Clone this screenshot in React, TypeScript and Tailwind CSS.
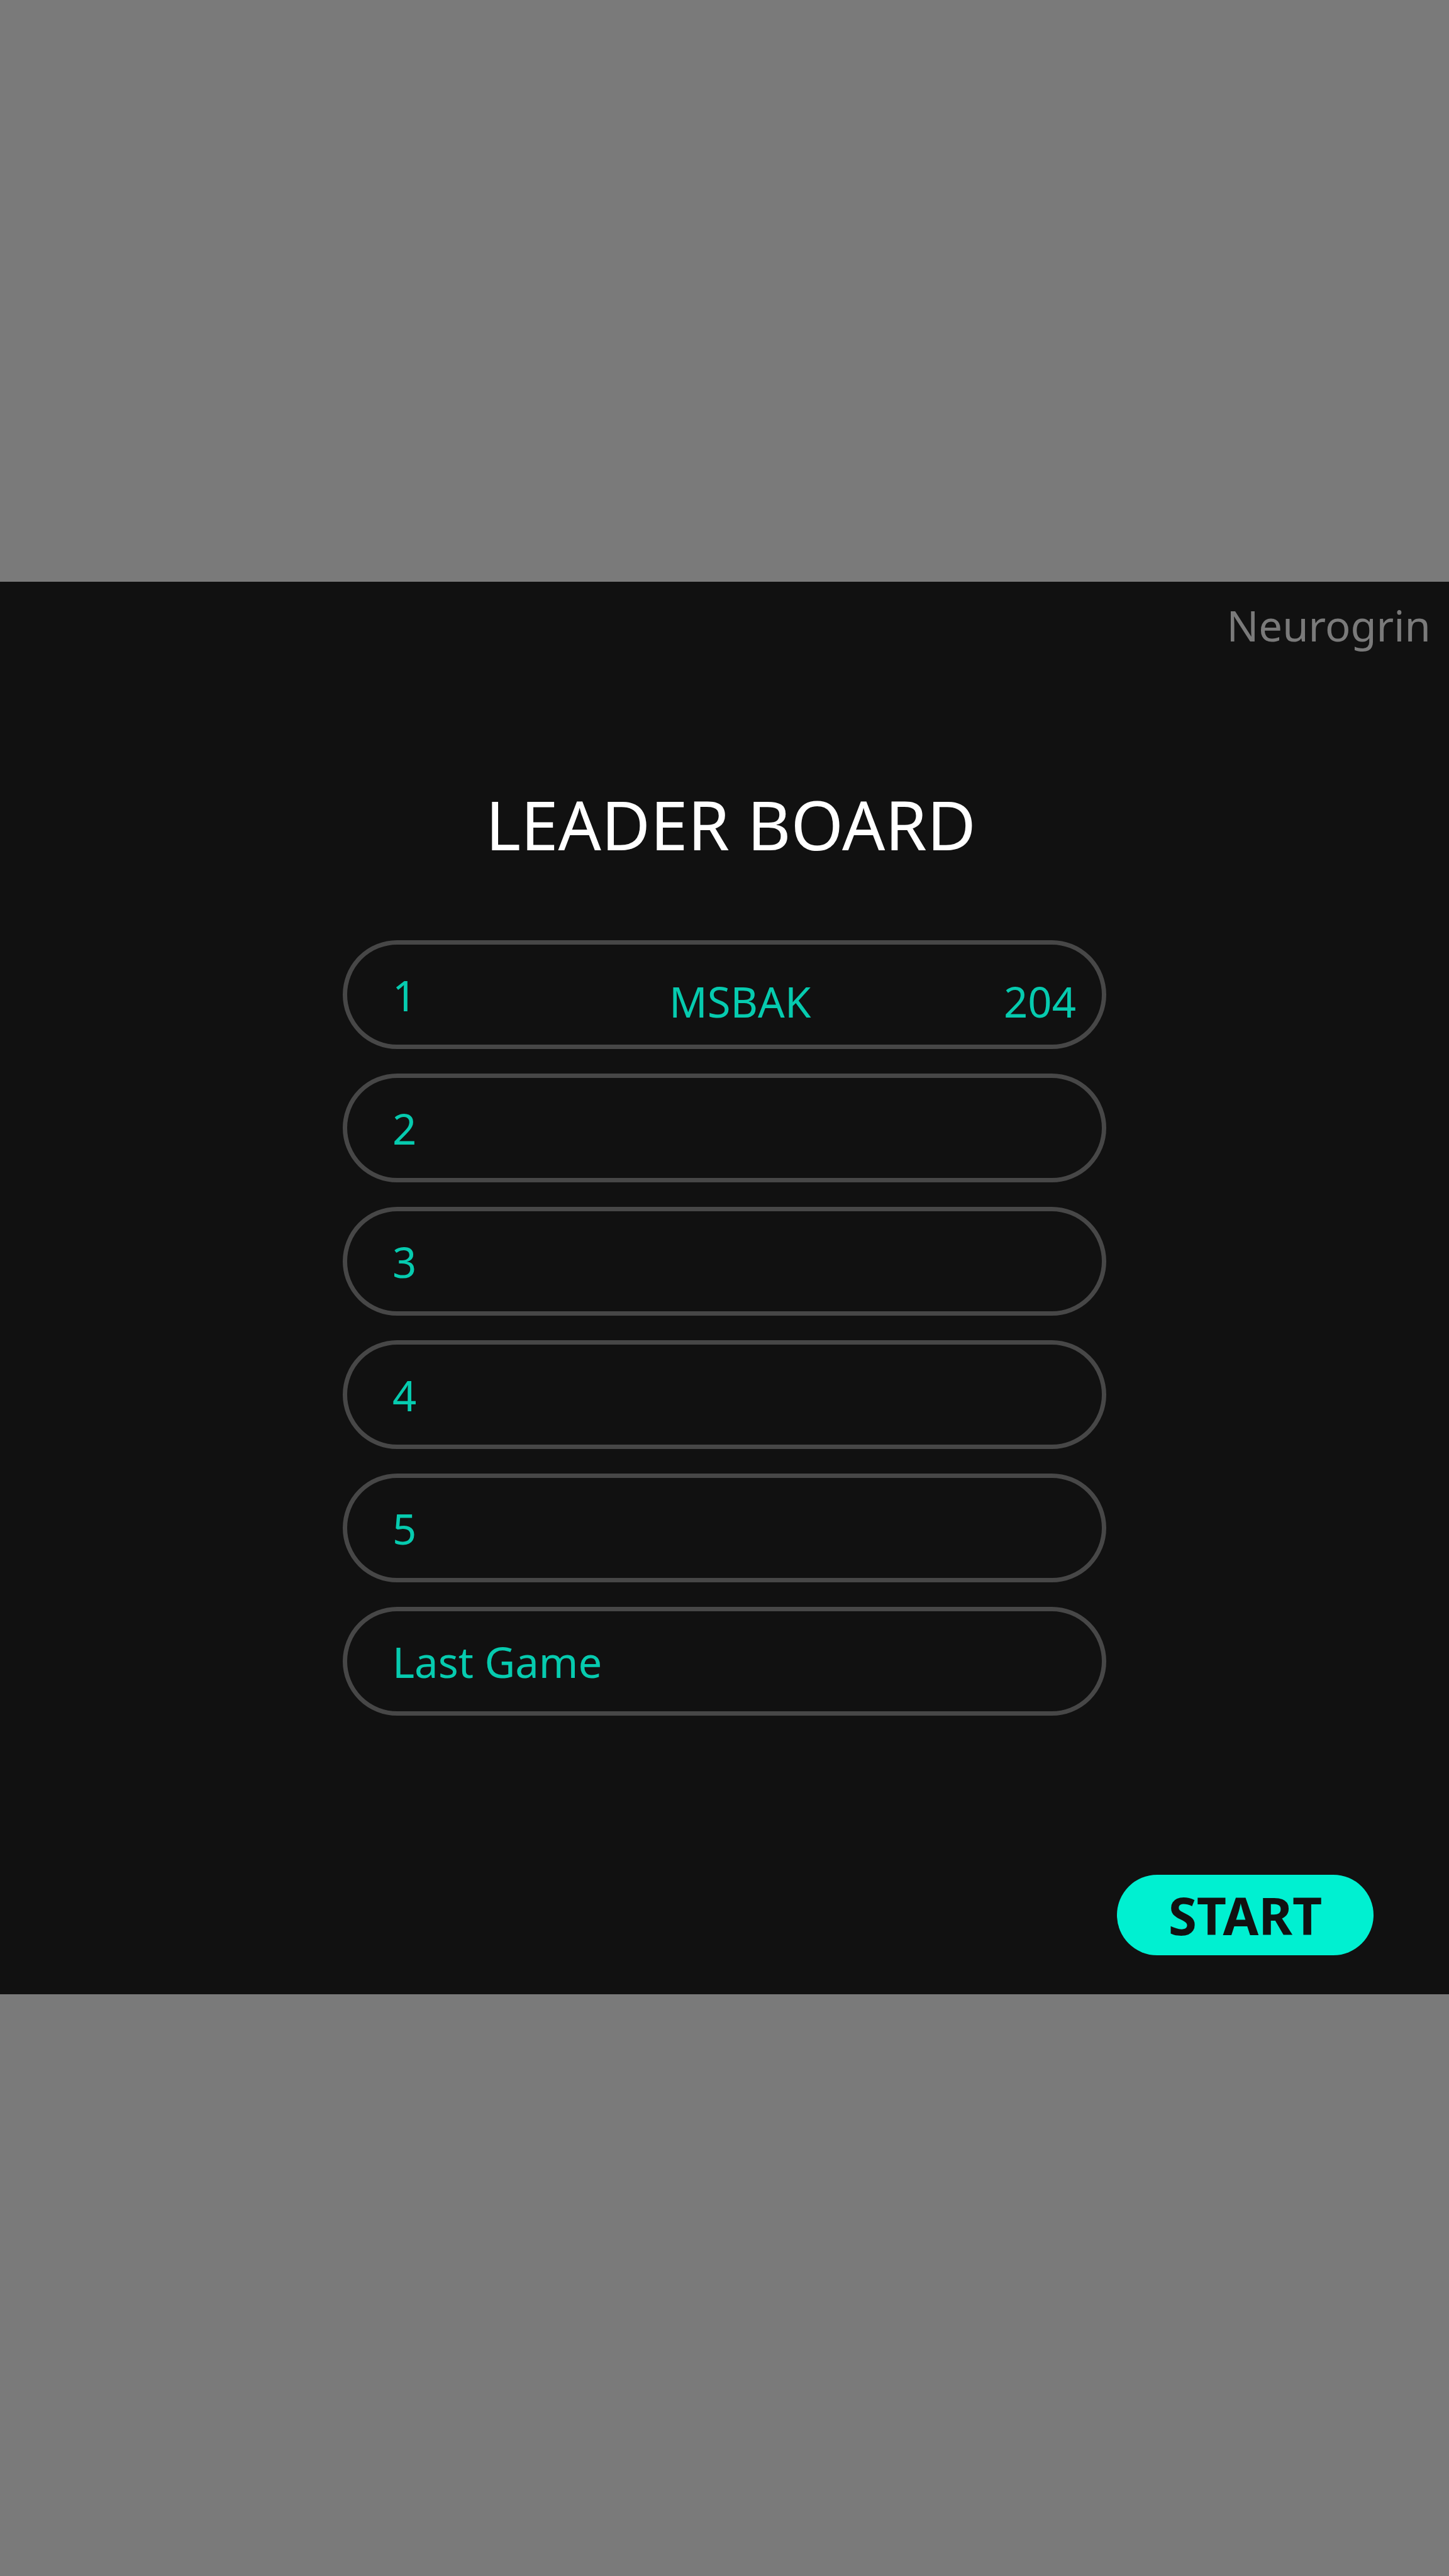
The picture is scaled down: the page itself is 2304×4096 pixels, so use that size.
type Entry = { label: string; name?: string; score?: number };

const entries: Entry[] = [
  { label: "1", name: "MSBAK", score: 204 },
  { label: "2" },
  { label: "3" },
  { label: "4" },
  { label: "5" },
  { label: "Last Game" },
];

function Row({ label, name, score }: Entry) {
  return (
    <li className="grid h-[173px] grid-cols-[440px_1fr_auto] items-center rounded-full border-[7px] border-[#474747] pr-[41px] pl-[72px] text-[67px] leading-[92px] text-[#06cbaf]">
      <span>{label}</span>
      <span className="pt-5">{name}</span>
      <span className="pt-5">{score}</span>
    </li>
  );
}

export default function App() {
  return (
    <div className="flex min-h-screen flex-col justify-center bg-[#7a7a7a] font-['Noto_Sans','Open_Sans',sans-serif]">
      <main className="bg-[#111111] pb-[62px]">
        <header className="flex justify-end pt-[23px] pr-[29px]">
          <p className="text-[67px] leading-[92px] text-[#7a7a7a]">Neurogrin</p>
        </header>
        <h1 className="mt-[198px] pl-5 text-center text-[107px] leading-[146px] text-white">
          LEADER BOARD
        </h1>
        <ol className="mx-auto mt-[111px] flex w-full max-w-[1214px] flex-col gap-[39px]">
          {entries.map((entry) => (
            <Row key={entry.label} {...entry} />
          ))}
        </ol>
        <div className="mt-[253px] flex justify-end pr-[120px]">
          <button
            type="button"
            className="h-32 w-[408px] rounded-full bg-[#00f0d1] text-[82px] leading-[128px] font-bold text-[#111111]"
          >
            START
          </button>
        </div>
      </main>
    </div>
  );
}
